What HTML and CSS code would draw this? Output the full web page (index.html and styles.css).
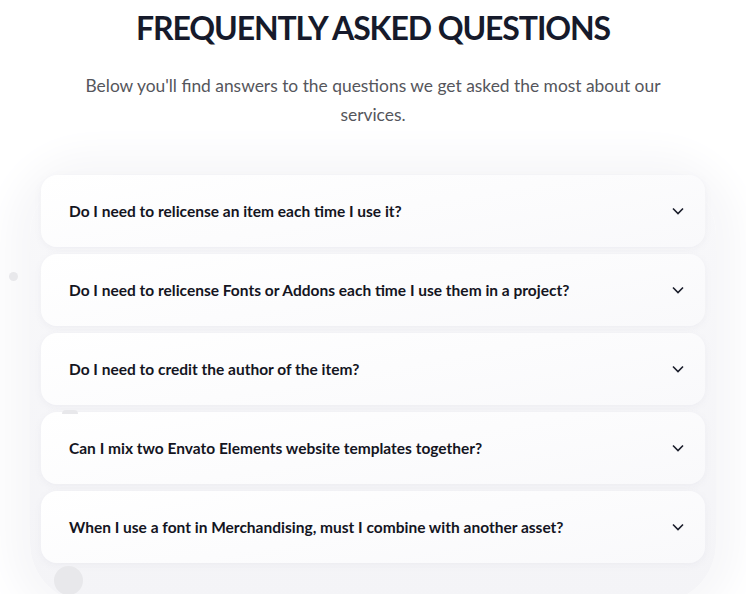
FILE: index.html
```html
<!DOCTYPE html>
<html lang="en">
<head>
<meta charset="utf-8">
<title>FAQ</title>
<link rel="stylesheet" href="styles.css">
</head>
<body>
<section class="faq">
  <span class="dot dot-small"></span>
  <span class="dot dot-mid"></span>
  <span class="dot dot-large"></span>
  <header class="faq-head">
    <h1 class="faq-title">FREQUENTLY ASKED QUESTIONS</h1>
    <p class="faq-sub">Below you'll find answers to the questions we get asked the most about our services.</p>
  </header>
  <div class="faq-list">
    <div class="faq-item"><span class="faq-q">Do I need to relicense an item each time I use it?</span><svg class="chev" viewBox="0 0 12 8" width="12" height="8"><path d="M1 1.5 L6 6.5 L11 1.5" fill="none" stroke="#1a1d2b" stroke-width="1.6"/></svg></div>
    <div class="faq-item"><span class="faq-q">Do I need to relicense Fonts or Addons each time I use them in a project?</span><svg class="chev" viewBox="0 0 12 8" width="12" height="8"><path d="M1 1.5 L6 6.5 L11 1.5" fill="none" stroke="#1a1d2b" stroke-width="1.6"/></svg></div>
    <div class="faq-item"><span class="faq-q">Do I need to credit the author of the item?</span><svg class="chev" viewBox="0 0 12 8" width="12" height="8"><path d="M1 1.5 L6 6.5 L11 1.5" fill="none" stroke="#1a1d2b" stroke-width="1.6"/></svg></div>
    <div class="faq-item"><span class="faq-q">Can I mix two Envato Elements website templates together?</span><svg class="chev" viewBox="0 0 12 8" width="12" height="8"><path d="M1 1.5 L6 6.5 L11 1.5" fill="none" stroke="#1a1d2b" stroke-width="1.6"/></svg></div>
    <div class="faq-item"><span class="faq-q">When I use a font in Merchandising, must I combine with another asset?</span><svg class="chev" viewBox="0 0 12 8" width="12" height="8"><path d="M1 1.5 L6 6.5 L11 1.5" fill="none" stroke="#1a1d2b" stroke-width="1.6"/></svg></div>
  </div>
</section>
</body>
</html>
```
FILE: styles.css
```css
html, body {
  margin: 0;
  padding: 0;
  background: #ffffff;
}
body {
  font-family: "Lato", "Liberation Sans", sans-serif;
  color: #161a2b;
  overflow: hidden;
  height: 594px;
}
.faq {
  position: relative;
  padding-top: 8px;
}
.faq-head {
  text-align: center;
}
.faq-title {
  margin: 0;
  font-size: 32px;
  line-height: 40px;
  letter-spacing: -1.1px;
  font-weight: 700;
  color: #161a2b;
}
.faq-sub {
  margin: 23px auto 0;
  width: 610px;
  font-size: 17.4px;
  line-height: 29px;
  color: #55565c;
}
.faq-list {
  margin: 46px 30px 0;
  padding: 0 11px 40px;
  display: flex;
  flex-direction: column;
  gap: 7px;
  border-radius: 60px;
  background: linear-gradient(180deg, #f8f8fa 0%, #f4f4f7 100%);
  box-shadow: 0 0 36px 22px rgba(247, 247, 249, 1);
}
.faq-item {
  height: 72px;
  box-sizing: border-box;
  padding: 0 21px 0 28px;
  display: flex;
  align-items: center;
  justify-content: space-between;
  border-radius: 16px;
  background: linear-gradient(170deg, #ffffff 0%, #f9f9fb 100%);
  box-shadow: 0 2px 6px rgba(220, 220, 228, 0.3);
}
.faq-q {
  font-size: 15.5px;
  font-weight: 700;
  color: #14151f;
}
.chev {
  display: block;
}
.dot {
  position: absolute;
  border-radius: 50%;
  background: #e8e8eb;
  z-index: 1;
}
.dot-small {
  left: 9px;
  top: 272px;
  width: 9px;
  height: 9px;
}
.dot-mid {
  left: 62px;
  top: 410px;
  width: 16px;
  height: 4px;
  border-radius: 8px 8px 0 0;
}
.dot-large {
  left: 54px;
  top: 566px;
  width: 29px;
  height: 29px;
}
```
